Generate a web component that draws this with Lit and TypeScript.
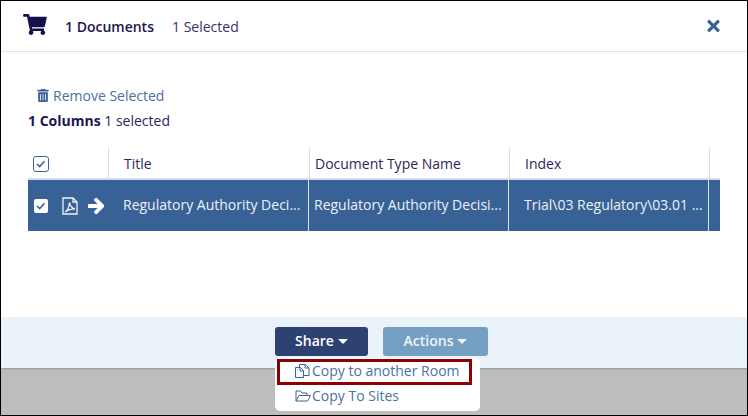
import { LitElement, html, css, svg } from "lit";
import { customElement } from "lit/decorators.js";

const check = svg`<path d="M3.5 8 6.5 11 12 4.8" fill="none" stroke-width="1.8"/>`;

@customElement("app-root")
export class AppRoot extends LitElement {
  static styles = css`
    :host { display: block; width: 748px; height: 416px; }
    * { box-sizing: border-box; }
    .page {
      position: relative; width: 748px; height: 416px; overflow: hidden;
      display: flex; flex-direction: column; background: #fff;
      border: 1px solid #000; font-family: "Open Sans", sans-serif;
      font-size: 14px; color: #241a55;
    }
    svg { display: block; flex: none; }
    .head {
      height: 51px; flex: none; border-bottom: 1px solid #dfe3ea;
      display: flex; align-items: center; padding: 0 27px 0 22px;
    }
    .cart { width: 24px; height: 21px; fill: #14104d; margin-right: 18px; margin-top: -4px; }
    .docs { font-weight: 600; width: 107px; color: #1d1650; }
    .sel { flex: 1; color: #3a3168; }
    .close { width: 13px; height: 18px; fill: #3a6395; }
    .body { height: 265px; flex: none; padding: 33px 27px 0; }
    .remove { display: flex; align-items: center; gap: 4px; padding-left: 9px; height: 20px; color: #4a71a0; }
    .remove svg { width: 12px; height: 13px; fill: #3a6395; }
    .cols { height: 20px; margin-top: 6px; line-height: 20px; color: #2c2360; }
    .cols b { font-weight: 700; color: #1d1650; }
    .grid { display: grid; width: 692px; }
    .hrow { grid-template-columns: 81px 201px 200px 200px 10px; margin-top: 16px; height: 33px; border-bottom: 2px solid #d3dcea; }
    .hrow > div { border-right: 1px solid #d9dfe9; padding-left: 15px; line-height: 34px; height: 31px; color: #2e2560; }
    .hrow > div:first-child { padding: 9px 0 0 5px; }
    .hrow > div:nth-child(3) { padding-left: 5px; }
    .hrow > div:last-child { border-right: 0; }
    .cb { width: 16px; height: 16px; border: 1px solid #3a6395; border-radius: 3px; stroke: #3a6395; background: #fff; }
    .brow { grid-template-columns: 80px 201px 200px 200px 11px; height: 51px; background: #386195; color: #eef2f7; font-weight: 500; }
    .brow > div {
      border-right: 1px solid #dbe3ee; line-height: 49px; padding-left: 15px;
      white-space: nowrap; overflow: hidden;
    }
    .brow > div:first-child { border-right: 0; padding: 0 0 0 6px; display: flex; align-items: center; }
    .brow > div:nth-child(3) { padding-left: 5px; }
    .brow > div:last-child { border-right: 0; }
    .cb2 { width: 14px; height: 14px; background: #fff; border-radius: 2px; stroke: #386195; }
    .pdf { width: 16px; height: 18px; margin-left: 14px; }
    .arrow { width: 16px; height: 18px; fill: #fff; stroke: #fff; stroke-width: 30; margin-left: 10px; }
    .foot {
      height: 51px; flex: none; background: #ebf3fa; display: flex; justify-content: center;
      align-items: flex-start; gap: 15px; padding: 10px 0 0 15px;
    }
    .btn {
      height: 29px; border-radius: 3px; color: #fff; font-weight: 600; display: flex;
      align-items: center; justify-content: center; gap: 4px; padding-bottom: 2px;
    }
    .btn i { border: 5px solid transparent; border-top-color: currentColor; border-bottom: 0; display: block; margin-top: 1px; }
    .share { width: 93px; background: #2e4173; }
    .actions { width: 105px; background: #75a0c3; color: #eef4f9; }
    .shade { flex: 1; background: #bfbcbc; box-shadow: inset 0 2px 2px -1px #98979b; }
    .menu {
      position: absolute; left: 274px; top: 357px; width: 205px; height: 53px;
      background: #fff; border-radius: 5px; color: #4a71a0;
    }
    .item { height: 25px; display: flex; align-items: center; padding-left: 20px; gap: 1px; }
    .item svg { width: 16px; height: 14px; fill: none; stroke: #3a6395; stroke-width: 1; }
    .mark { position: absolute; left: 2px; top: 1px; width: 195px; height: 26px; border: 3px solid #8b0000; }
  `;

  render() {
    return html`<div class="page">
      <div class="head">
        <svg class="cart" viewBox="0 0 576 512"><path d="M528.12 301.319l47.273-208C578.806 78.301 567.391 64 551.99 64H159.208l-9.166-44.81C147.758 8.021 137.93 0 126.529 0H24C10.745 0 0 10.745 0 24v16c0 13.255 10.745 24 24 24h69.883l70.248 343.435C147.325 417.1 136 435.222 136 456c0 30.928 25.072 56 56 56s56-25.072 56-56c0-15.674-6.447-29.835-16.824-40h209.647C430.447 426.165 424 440.326 424 456c0 30.928 25.072 56 56 56s56-25.072 56-56c0-22.172-12.888-41.332-31.579-50.405l5.517-24.276c3.413-15.018-8.002-29.319-23.403-29.319H218.117l-6.545-32h293.145c11.206 0 20.92-7.754 23.403-18.681z"/></svg>
        <span class="docs">1 Documents</span>
        <span class="sel">1 Selected</span>
        <svg class="close" viewBox="0 0 352 512"><path d="M242.72 256l100.07-100.07c12.28-12.28 12.28-32.19 0-44.48l-22.24-22.24c-12.28-12.28-32.19-12.28-44.48 0L176 189.28 75.93 89.21c-12.28-12.28-32.19-12.28-44.48 0L9.21 111.45c-12.28 12.28-12.28 32.19 0 44.48L109.28 256 9.21 356.07c-12.28 12.28-12.28 32.19 0 44.48l22.24 22.24c12.28 12.28 32.2 12.28 44.48 0L176 322.72l100.07 100.07c12.28 12.28 32.2 12.28 44.48 0l22.24-22.24c12.28-12.28 12.28-32.19 0-44.48L242.72 256z"/></svg>
      </div>
      <div class="body">
        <div class="remove">
          <svg viewBox="0 0 448 512"><path d="M32 464a48 48 0 0 0 48 48h288a48 48 0 0 0 48-48V128H32zm272-256a16 16 0 0 1 32 0v224a16 16 0 0 1-32 0zm-96 0a16 16 0 0 1 32 0v224a16 16 0 0 1-32 0zm-96 0a16 16 0 0 1 32 0v224a16 16 0 0 1-32 0zM432 32H312l-9.4-18.7A24 24 0 0 0 281.1 0H166.8a23.72 23.72 0 0 0-21.4 13.3L136 32H16A16 16 0 0 0 0 48v32a16 16 0 0 0 16 16h416a16 16 0 0 0 16-16V48a16 16 0 0 0-16-16z"/></svg>
          <span>Remove Selected</span>
        </div>
        <div class="cols"><b>1 Columns</b> 1 selected</div>
        <div class="grid hrow">
          <div><svg class="cb" viewBox="0 0 16 16">${check}</svg></div>
          <div>Title</div>
          <div>Document Type Name</div>
          <div>Index</div>
          <div></div>
        </div>
        <div class="grid brow">
          <div>
            <svg class="cb2" viewBox="0 0 16 16">${check}</svg>
            <svg class="pdf" viewBox="0 0 16 18" fill="none" stroke="#eef2f7" stroke-width="1.3">
              <path d="M1 1h10l4 4v12H1z"/><path d="M11 1v4h4"/>
              <path d="M3 15c2.5-1.2 4-4.5 4.5-9.5.5 3.2 2.5 5.5 5.5 6.5-3.4-.2-7 .8-10 3z"/>
            </svg>
            <svg class="arrow" viewBox="0 0 448 512"><path d="M190.5 66.9l22.2-22.2c9.4-9.4 24.6-9.4 33.9 0L441 239c9.4 9.4 9.4 24.6 0 33.9L246.6 467.3c-9.4 9.4-24.6 9.4-33.9 0l-22.2-22.2c-9.5-9.5-9.3-25 .4-34.3L311.4 296H24c-13.3 0-24-10.7-24-24v-32c0-13.3 10.7-24 24-24h287.4L190.9 101.2c-9.8-9.3-10-24.8-.4-34.3z"/></svg>
          </div>
          <div>Regulatory Authority Deci...</div>
          <div>Regulatory Authority Decisi...</div>
          <div>Trial\\03 Regulatory\\03.01 ...</div>
          <div></div>
        </div>
      </div>
      <div class="foot">
        <div class="btn share">Share <i></i></div>
        <div class="btn actions">Actions <i></i></div>
      </div>
      <div class="shade"></div>
      <div class="menu">
        <div class="item">
          <svg viewBox="0 0 16 14"><path d="M4.5 3.5v-3h6l3.5 3.5v7.5H8.5"/><path d="M10 .5v3.5h4"/><path d="M.5 3.5h5l3 3v7H.5z"/><path d="M5 3.5v3.5h3.5"/></svg>
          <span>Copy to another Room</span>
        </div>
        <div class="item">
          <svg viewBox="0 0 16 14"><path d="M1 12V2h4.5l1.5 2h5v2.5"/><path d="M1 12l3-5.5h11.5L12.5 12z"/></svg>
          <span>Copy To Sites</span>
        </div>
        <div class="mark"></div>
      </div>
    </div>`;
  }
}
